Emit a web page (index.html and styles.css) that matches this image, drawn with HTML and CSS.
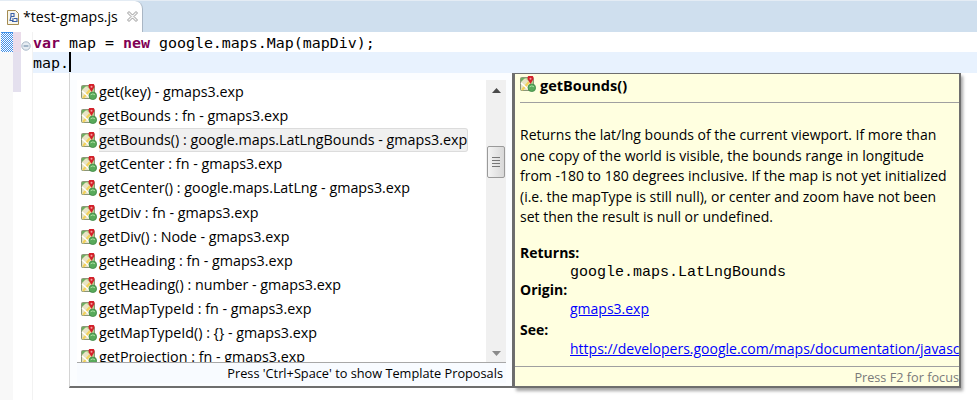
FILE: index.html
```html
<!DOCTYPE html>
<html lang="en">
<head>
<meta charset="utf-8">
<title>test-gmaps.js</title>
<link rel="stylesheet" href="styles.css">
</head>
<body>
<svg class="defs" width="0" height="0" aria-hidden="true">
  <symbol id="mapicon" viewBox="0 0 16 16">
    <rect x="0.5" y="1.5" width="13" height="13" rx="1" fill="#b7d58f" stroke="#8c9678"/>
    <path d="M1 10 L1 14 H8 L13 14 V9 L6 3 H1 Z" fill="#e9e4c4"/>
    <path d="M1 2 H5 L1 6 Z" fill="#6fae62"/>
    <path d="M2 14 L9 6" stroke="#f3d25a" stroke-width="2"/>
    <path d="M1 7 L8 13" stroke="#ffffff" stroke-width="1.6"/>
    <path d="M10.5 8 L7.8 3.4 A3 3 0 1 1 13.2 3.4 Z" fill="#d4202a"/>
    <circle cx="10.5" cy="2.8" r="1" fill="#f2a0a0"/>
    <circle cx="11.8" cy="11.8" r="3.8" fill="#58aa5a" stroke="#3c8844" stroke-width="0.8"/>
    <path d="M9.6 10.8 Q11.8 9 14 10.8" stroke="#a6dea0" fill="none"/>
  </symbol>
</svg>
<div class="tabbar">
  <div class="tab">
    <svg class="fileicon" width="16" height="16" viewBox="0 0 16 16">
      <path d="M2.5 1.5 H10.5 L13.5 4.5 V15.5 H2.5 Z" fill="#f8f6ec" stroke="#a48b50"/>
      <path d="M6 4.5 H9 V7.5 H6 Z M6 7.5 L5 11.5 H8 V9 M9 9.5 H12 V12.5 H7" fill="none" stroke="#3a5fa8" stroke-width="1.1"/>
    </svg>
    <span class="tabname">*test-gmaps.js</span>
    <svg class="tabclose" width="13" height="13" viewBox="0 0 13 13">
      <path d="M1.5 3 L3 1.5 L6.5 5 L10 1.5 L11.5 3 L8 6.5 L11.5 10 L10 11.5 L6.5 8 L3 11.5 L1.5 10 L5 6.5 Z" fill="#f4f4f4" stroke="#9a9a9a"/>
    </svg>
  </div>
</div>
<div class="editor">
  <div class="gutter">
    <div class="mark"></div>
  </div>
  <div class="ruler">
    <div class="ruler-a"></div>
    <div class="ruler-b"></div>
  </div>
  <div class="fold"><svg width="10" height="10" viewBox="0 0 10 10"><circle cx="5" cy="5" r="4.2" fill="#e6ecf2" stroke="#a8b8c8"/><path d="M2.6 5 H7.4" stroke="#5f7f9f"/></svg></div>
  <div class="code">
    <div class="line"><span class="kw">var</span> map = <span class="kw">new</span> google.maps.Map(mapDiv);</div>
    <div class="line current">map.<span class="caret"></span></div>
  </div>
</div>

<div class="popup">
  <div class="listwrap">
    <ul class="list">
      <li><svg class="ic"><use href="#mapicon"/></svg><span>get(key) - gmaps3.exp</span></li>
      <li><svg class="ic"><use href="#mapicon"/></svg><span>getBounds : fn - gmaps3.exp</span></li>
      <li class="sel"><svg class="ic"><use href="#mapicon"/></svg><span>getBounds() : google.maps.LatLngBounds - gmaps3.exp</span></li>
      <li><svg class="ic"><use href="#mapicon"/></svg><span>getCenter : fn - gmaps3.exp</span></li>
      <li><svg class="ic"><use href="#mapicon"/></svg><span>getCenter() : google.maps.LatLng - gmaps3.exp</span></li>
      <li><svg class="ic"><use href="#mapicon"/></svg><span>getDiv : fn - gmaps3.exp</span></li>
      <li><svg class="ic"><use href="#mapicon"/></svg><span>getDiv() : Node - gmaps3.exp</span></li>
      <li><svg class="ic"><use href="#mapicon"/></svg><span>getHeading : fn - gmaps3.exp</span></li>
      <li><svg class="ic"><use href="#mapicon"/></svg><span>getHeading() : number - gmaps3.exp</span></li>
      <li><svg class="ic"><use href="#mapicon"/></svg><span>getMapTypeId : fn - gmaps3.exp</span></li>
      <li><svg class="ic"><use href="#mapicon"/></svg><span>getMapTypeId() : {} - gmaps3.exp</span></li>
      <li><svg class="ic"><use href="#mapicon"/></svg><span>getProjection : fn - gmaps3.exp</span></li>
    </ul>
    <div class="scrollbar">
      <svg class="arrow" width="9" height="5" viewBox="0 0 9 5"><path d="M4.5 0 L9 5 H0 Z" fill="#4a4a4a"/></svg>
      <div class="thumb"><i></i><i></i><i></i><i></i></div>
      <svg class="arrow" width="9" height="5" viewBox="0 0 9 5"><path d="M0 0 H9 L4.5 5 Z" fill="#8a8a8a"/></svg>
    </div>
  </div>
  <div class="hint">Press 'Ctrl+Space' to show Template Proposals</div>
</div>

<div class="info">
  <div class="info-head"><svg class="ic"><use href="#mapicon"/></svg><b>getBounds()</b></div>
  <div class="info-body">
    <p class="desc">Returns the lat/lng bounds of the current viewport. If more than<br>one copy of the world is visible, the bounds range in longitude<br>from -180 to 180 degrees inclusive. If the map is not yet initialized<br>(i.e. the mapType is still null), or center and zoom have not been<br>set then the result is null or undefined.</p>
    <div class="lbl">Returns:</div>
    <div class="val mono">google.maps.LatLngBounds</div>
    <div class="lbl">Origin:</div>
    <div class="val"><a href="#">gmaps3.exp</a></div>
    <div class="lbl">See:</div>
    <div class="val nowrap"><a href="#">https://developers.google.com/maps/documentation/javascript/reference</a></div>
  </div>
  <div class="info-foot">Press F2 for focus</div>
</div>
</body>
</html>
```
FILE: styles.css
```css
* { box-sizing: border-box; }
html, body { margin: 0; padding: 0; }
body {
  width: 977px;
  height: 400px;
  overflow: hidden;
  position: relative;
  background: #fff;
  font-family: "Open Sans", "Noto Sans", sans-serif;
  font-size: 14px;
  color: #000;
}
.defs { position: absolute; }
.tabbar {
  height: 32px;
  background: #cfdfee;
  border-top: 1px solid #e4ecf4;
}
.tab {
  width: 143px;
  height: 31px;
  background: #fff;
  border-right: 1px solid #a9b6c4;
  border-top-right-radius: 8px;
  display: flex;
  align-items: center;
  padding-left: 5px;
}
.fileicon { flex: none; }
.tabname { margin-left: 2px; font-size: 14.1px; white-space: nowrap; }
.tabclose { margin-left: 8px; flex: none; }
.editor {
  display: flex;
  height: 368px;
  position: relative;
}
.gutter { width: 13px; background: #f8f8f8; flex: none; padding-left: 1px; }
.mark {
  width: 12px;
  height: 20px;
  background-color: #fff;
  background-image: conic-gradient(#3f8fe8 25%, #fff 0 50%, #3f8fe8 0 75%, #fff 0);
  background-size: 2px 2px;
  border-top: 1px solid #3f8fe8;
}
.ruler { width: 8px; flex: none; }
.ruler-a { height: 20px; background: #eadcea; }
.ruler-b { height: 40px; background: #e4e0ee; }
.fold { width: 12px; flex: none; padding: 4px 0 0 0; }
.code {
  flex: 1;
  font-family: "DejaVu Sans Mono", monospace;
  font-size: 14.95px;
  border-left: 1px solid #f2f2f2;
  margin-left: -1px;
}
.line { height: 20px; line-height: 22px; white-space: pre; }
.current { background: #e8f2fe; height: 21px; display: flex; line-height: 23px; }
.kw { color: #7f0055; font-weight: bold; }
.caret { display: inline-block; width: 2px; height: 20px; background: #000; }

.popup {
  position: absolute;
  left: 69px;
  top: 73px;
  width: 445px;
  height: 315px;
  background: #fbfdff;
  border-left: 1px solid #d4d4d4;
  border-right: 2px solid #6e6e6e;
  border-bottom: 2px solid #6e6e6e;
  padding: 7px 6px 5px 7px;
  display: flex;
  flex-direction: column;
}
.listwrap { display: flex; height: 282px; background: #fff; }
.list {
  list-style: none;
  margin: 0;
  padding: 0;
  flex: 1;
  overflow: hidden;
  min-width: 0;
}
.list li {
  height: 24.1px;
  display: flex;
  align-items: center;
  padding-left: 4px;
  white-space: nowrap;
  font-size: 14.3px;
}
.ic { width: 16px; height: 16px; flex: none; }
.list li span { margin-left: 2px; flex: 1; height: 24px; line-height: 24px; }
.list li.sel span {
  background: #f0f0f0;
  border: 1px solid #dcdcdc;
  border-left: 0;
  border-radius: 0 3px 3px 0;
  margin-right: 18px;
  line-height: 22px;
}
.scrollbar {
  width: 20px;
  flex: none;
  background: #f0f0f0;
  display: flex;
  flex-direction: column;
  align-items: center;
  padding-top: 8px;
  position: relative;
}
.scrollbar .arrow:last-child { position: absolute; bottom: 6px; }
.thumb {
  margin-top: 53px;
  width: 18px;
  height: 32px;
  border: 1px solid #9a9a9a;
  border-radius: 2px;
  background: linear-gradient(90deg, #f4f4f4, #d8d8d8);
  display: flex;
  flex-direction: column;
  align-items: center;
  justify-content: center;
  gap: 2px;
}
.thumb i { display: block; width: 8px; height: 1px; background: #777; }
.hint {
  border-top: 1px solid #a8a8a8;
  height: 21px;
  line-height: 20px;
  text-align: right;
  font-size: 12.75px;
  padding-right: 3px;
  background: #f8fbff;
  white-space: nowrap;
}

.info {
  position: absolute;
  left: 514px;
  top: 73px;
  width: 447px;
  height: 315px;
  background: #ffffe0;
  border: 1px solid #6e6e6e;
  border-width: 1px 2px 2px 1px;
  box-shadow: 2px 3px 3px rgba(0,0,0,.35);
  overflow: hidden;
  display: flex;
  flex-direction: column;
}
.info-head {
  height: 29px;
  margin-left: 5px;
  border-bottom: 1px solid #a0a0a0;
  display: flex;
  align-items: flex-start;
  padding-top: 2px;
}
.info-head b { margin-left: 4px; font-size: 14.5px; line-height: 19px; }
.info-body { flex: 1; padding: 22px 0 0 5px; overflow: hidden; font-size: 14px; }
.desc { margin: 0 0 15px; white-space: nowrap; line-height: 20.5px; }
.lbl { font-weight: bold; line-height: 19.4px; }
.val { padding-left: 50px; line-height: 20.4px; }
.mono { font-family: "Liberation Mono", monospace; font-size: 15px; height: 18px; line-height: 21px; }
.nowrap { white-space: nowrap; }
.val a { color: #0000ff; text-decoration: underline; }
.info-foot {
  height: 20px;
  border-top: 1px solid #a0a0a0;
  text-align: right;
  line-height: 21px;
  font-size: 12.7px;
  color: #7a7a7a;
  white-space: nowrap;
}
```
